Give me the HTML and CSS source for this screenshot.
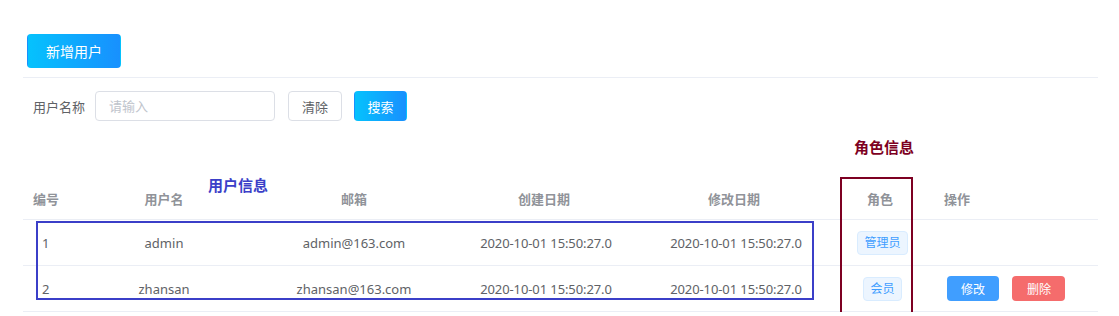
FILE: index.html
```html
<!DOCTYPE html>
<html>
	<head>
		<title>用户管理</title>
		<meta name="viewport" content="width=device-width, initial-scale=1" />
		<link rel="stylesheet" href="styles.css">
	</head>
	<body>
		<div class="page">
			<div class="toolbar">
				<button class="btn btn-add">新增用户</button>
			</div>
			<div class="search">
				<label>用户名称</label>
				<input type="text" placeholder="请输入">
				<button class="btn btn-plain">清除</button>
				<button class="btn btn-search">搜索</button>
			</div>
			<div class="table">
				<div class="row head">
					<div class="cell first">编号</div>
					<div class="cell">用户名</div>
					<div class="cell">邮箱</div>
					<div class="cell">创建日期</div>
					<div class="cell">修改日期</div>
					<div class="cell">角色</div>
					<div class="cell left">操作</div>
				</div>
				<div class="row">
					<div class="cell id">1</div>
					<div class="cell">admin</div>
					<div class="cell">admin@163.com</div>
					<div class="cell date">2020-10-01 15:50:27.0</div>
					<div class="cell date">2020-10-01 15:50:27.0</div>
					<div class="cell role"><span class="tag">管理员</span></div>
					<div class="cell left actions"></div>
				</div>
				<div class="row">
					<div class="cell id">2</div>
					<div class="cell">zhansan</div>
					<div class="cell">zhansan@163.com</div>
					<div class="cell date">2020-10-01 15:50:27.0</div>
					<div class="cell date">2020-10-01 15:50:27.0</div>
					<div class="cell role"><span class="tag">会员</span></div>
					<div class="cell left actions">
						<button class="btn btn-small btn-edit">修改</button>
						<button class="btn btn-small btn-del">删除</button>
					</div>
				</div>
			</div>

			<!-- annotations drawn over the table -->
			<div class="note note-user">用户信息</div>
			<div class="frame frame-user"></div>
			<div class="note note-role">角色信息</div>
			<div class="frame frame-role"></div>
		</div>
	</body>
</html>
```

FILE: styles.css
```css
body {
	margin: 0;
	font-family: "Noto Sans", "Noto Sans CJK SC", sans-serif;
	color: #606266;
	background: #fff;
}
.page {
	position: relative;
	padding: 34px 21px 0 23px;
}
.btn {
	font-family: inherit;
	border: 1px solid transparent;
	border-radius: 4px;
	cursor: pointer;
	padding: 0;
}
.toolbar {
	padding-bottom: 9px;
	border-bottom: 1px solid #ebeef5;
}
.btn-add {
	margin-left: 4px;
	width: 94px;
	height: 34px;
	font-size: 14px;
	color: #fff;
	background: linear-gradient(to right, #05c2fd, #1890fe);
}
.search {
	display: flex;
	align-items: center;
	margin-top: 13px;
	padding-left: 10px;
}
.search label {
	font-size: 13px;
	color: #606266;
	width: 62px;
}
.search input {
	box-sizing: border-box;
	width: 180px;
	height: 30px;
	border: 1px solid #dcdfe6;
	border-radius: 4px;
	padding: 0 13px;
	font-family: inherit;
	font-size: 13px;
	outline: none;
}
.search input::placeholder { color: #c0c4cc; }
.btn-plain {
	margin-left: 13px;
	width: 54px;
	height: 30px;
	font-size: 13px;
	color: #606266;
	background: #fff;
	border-color: #dcdfe6;
}
.btn-search {
	margin-left: 12px;
	width: 53px;
	height: 30px;
	font-size: 13px;
	color: #fff;
	background: linear-gradient(to right, #05c2fd, #1890fe);
}
.table {
	margin-top: 56px;
	font-size: 13px;
}
.row {
	display: grid;
	grid-template-columns: 46px 190px 190px 190px 190px 102px 1fr;
	height: 45px;
	border-bottom: 1px solid #ebeef5;
	align-items: center;
}
.row.head {
	height: 42px;
	color: #909399;
	font-weight: bold;
}
.cell { text-align: center; white-space: nowrap; }
.cell.first { text-align: left; padding-left: 10px; }
.cell.id { text-align: left; padding-left: 19px; }
.cell.date { padding-left: 4px; letter-spacing: -0.1px; }
.cell.role { padding-left: 5px; }
.cell.left { text-align: left; padding-left: 13px; }
.cell.actions { padding-left: 16px; }
.tag {
	display: inline-block;
	box-sizing: border-box;
	height: 24px;
	line-height: 22px;
	padding: 0 6px;
	font-size: 12px;
	color: #409eff;
	background: #ecf5ff;
	border: 1px solid #d9ecff;
	border-radius: 4px;
}
.btn-small {
	width: 52px;
	height: 25px;
	font-size: 12px;
	color: #fff;
}
.btn-edit { background: #409eff; }
.btn-del { background: #f56c6c; margin-left: 10px; width: 53px; }
.note {
	position: absolute;
	font-size: 15px;
	font-weight: bold;
	line-height: 18px;
}
.note-user { left: 208px; top: 176px; color: #3b3fc8; }
.note-role { left: 854px; top: 138px; color: #7d0022; }
.frame {
	position: absolute;
	box-sizing: border-box;
	border: 2px solid;
}
.frame-user {
	left: 36px; top: 221px;
	width: 778px; height: 79px;
	border-color: #3b3fc8;
}
.frame-role {
	left: 840px; top: 177px;
	width: 73px; height: 138px;
	border-color: #7d0022;
}
```
